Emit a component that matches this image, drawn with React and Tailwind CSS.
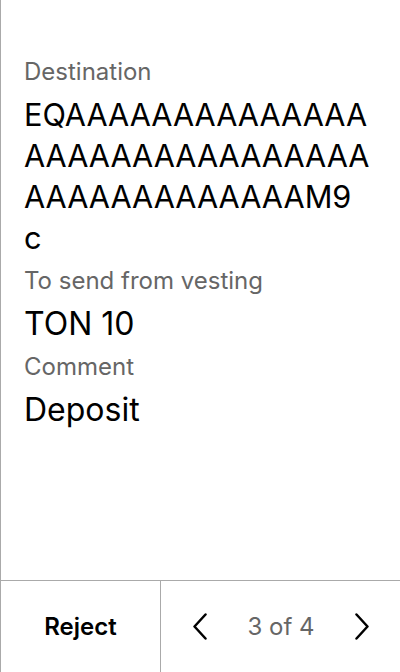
import React from 'react';

const ADDRESS_LINES = ['EQ' + 'A'.repeat(14), 'A'.repeat(16), 'A'.repeat(13) + 'M9', 'c'];

function Field({ label, children, size = 'text-[32px]' }) {
  return (
    <div>
      <div className="text-[24px] leading-[45px] text-[#666]">{label}</div>
      <div className={`${size} leading-[41px] text-black whitespace-nowrap`}>{children}</div>
    </div>
  );
}

export default function App() {
  return (
    <div className="w-[400px] h-[672px] flex flex-col bg-white border-l border-[#aaa] font-['Inter','Noto_Sans',sans-serif]">
      <div className="flex-1 pl-[23px] pr-5 pt-[49px]">
        <Field label="Destination" size="text-[30.7px]">
          {ADDRESS_LINES.map((l, i) => (
            <div key={i}>{l}</div>
          ))}
        </Field>
        <Field label="To send from vesting">TON 10</Field>
        <Field label="Comment">Deposit</Field>
      </div>
      <div className="h-[92px] flex border-t border-[#aaa]">
        <button type="button" className="w-[159px] text-[24px] font-semibold text-black">Reject</button>
        <div className="flex-1 flex items-center justify-between border-l border-[#aaa] pl-[32px] pr-[31px]">
          <svg width="14" height="27" viewBox="0 0 14 27" fill="none" stroke="black" strokeWidth="2.5" strokeLinecap="round" strokeLinejoin="round">
            <polyline points="12.5,1.5 1.5,13.5 12.5,25.5" />
          </svg>
          <span className="text-[24px] text-[#666]">3 of 4</span>
          <svg width="14" height="27" viewBox="0 0 14 27" fill="none" stroke="black" strokeWidth="2.5" strokeLinecap="round" strokeLinejoin="round">
            <polyline points="1.5,1.5 12.5,13.5 1.5,25.5" />
          </svg>
        </div>
      </div>
    </div>
  );
}
